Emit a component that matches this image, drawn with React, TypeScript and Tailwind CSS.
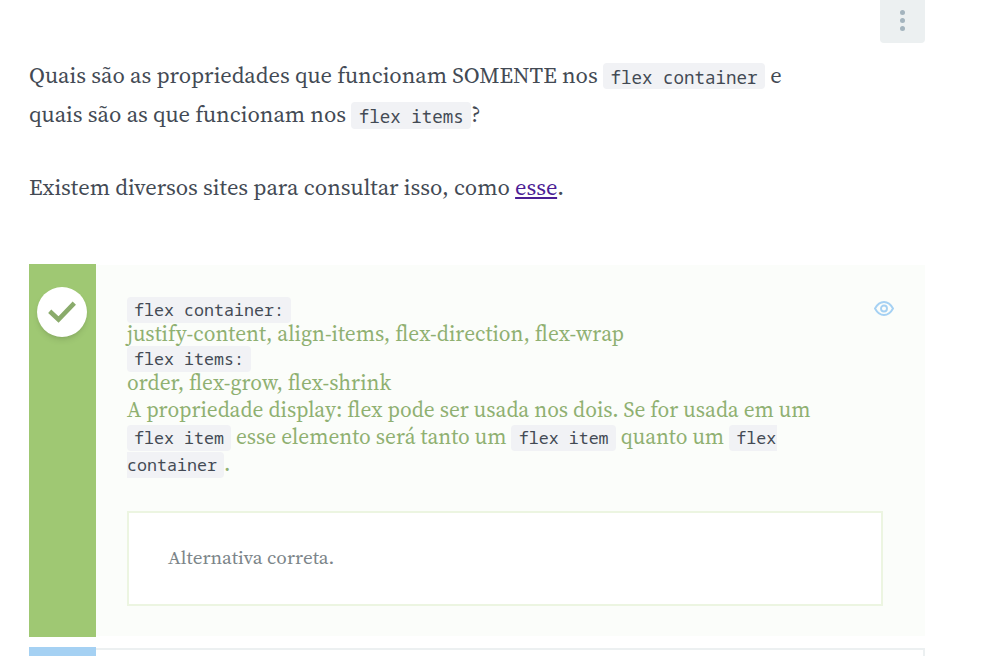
import type { ReactNode } from 'react';

const serif = "font-['Source_Serif_Pro','Source_Serif_4','Noto_Serif_CJK_SC','Liberation_Serif',serif]";
const mono = "font-['Noto_Sans_Mono','DejaVu_Sans_Mono',monospace]";

function Code({ children, className = '' }: { children: ReactNode; className?: string }) {
  return <code className={`rounded bg-[#f1f2f5] leading-none text-[#434a54] ${mono} ${className}`}>{children}</code>;
}

export default function App() {
  return (
    <main className={`relative h-[656px] w-[982px] overflow-hidden bg-white ${serif}`}>
      <div className="absolute top-0 left-[880px] flex h-[43px] w-[45px] flex-col items-center gap-[3px] rounded-b bg-[#ecf0f1] pt-[10px]">
        <i className="size-[5px] rounded-full bg-[#a4b4be]" />
        <i className="size-[5px] rounded-full bg-[#a4b4be]" />
        <i className="size-[5px] rounded-full bg-[#a4b4be]" />
      </div>
      <section className="h-[264px] pt-14 pl-[29px] text-[22.5px] leading-[39px] whitespace-nowrap text-[#434a54]">
        <p className="h-[39px]">
          Quais são as propriedades que funcionam SOMENTE nos{' '}
          <Code className="relative top-px pt-[2px] pr-[7.5px] pb-0 pl-[7.5px] text-[17.5px]">flex container</Code> e
        </p>
        <p className="h-[39px]">
          quais são as que funcionam nos <Code className="relative top-px px-[7.5px] pt-[2px] pb-px text-[17.5px]">flex items</Code>?
        </p>
        <p className="mt-[34px]">
          Existem diversos sites para consultar isso, como <a className="text-[#4c1d95] underline">esse</a>.
        </p>
      </section>
      <section className="ml-[29px] flex h-[373px] w-[896px]">
        <div className="w-[67px] bg-[#9fc873] pt-[23px] pl-2">
          <div className="flex size-[50px] items-center justify-center rounded-full bg-white shadow-md">
            <svg width="28" height="22" viewBox="0 0 28 22" fill="none" stroke="#8aab6b" strokeWidth="4.6">
              <path d="M1.7 10.3 10.5 18.5 26.3 2.2" />
            </svg>
          </div>
        </div>
        <div className="relative my-px flex-1 bg-[#fbfdfa] pt-8 pl-[31px] text-[21.37px] whitespace-nowrap text-[#8fb071]">
          <svg className="absolute top-[36px] right-[31px]" width="20" height="15" viewBox="0 0 20 15" fill="none" stroke="#a5d1f3" strokeWidth="1.9">
            <path d="M1 7.5Q4.5 1 10 1t9 6.5Q15.5 14 10 14T1 7.5Z" />
            <circle cx="10" cy="7.5" r="3" />
          </svg>
          <p className="h-6 leading-[24px]"><Code className="px-[7px] pt-px pb-[2px] text-[16.67px]">flex container:</Code></p>
          <p className="h-[25px] leading-[25px]">justify-content, align-items, flex-direction, flex-wrap</p>
          <p className="h-6 leading-[24px]"><Code className="px-[7px] pt-px pb-[2px] text-[16.67px]">flex items:</Code></p>
          <p className="h-[26px] leading-[25px]">order, flex-grow, flex-shrink</p>
          <p className="h-[27px] leading-[27px]">A propriedade display: flex pode ser usada nos dois. Se for usada em um</p>
          <p className="h-[27px] leading-[27px]">
            <Code className="px-[7px] pt-px pb-[2px] text-[16.67px]">flex item</Code> esse elemento será tanto um{' '}
            <Code className="px-[7.2px] pt-px pb-[2px] text-[16.67px]">flex item</Code> quanto um{' '}
            <Code className="rounded-r-none pt-px pr-px pb-[2px] pl-[7.2px] text-[16.67px]">flex</Code>
          </p>
          <p className="h-[27px] leading-[27px]"><Code className="rounded-l-none pt-px pr-[7px] pb-[2px] text-[16.67px]">container</Code>.</p>
          <div className="mt-[34px] h-[95px] w-[756px] border-2 border-[#ecf5e1] bg-white pt-[29px] pl-[39px] text-[19.15px] leading-[30px] text-[#7c8589]">Alternativa correta.</div>
        </div>
      </section>
      <section className="mt-[10px] ml-[29px] flex w-[896px]">
        <div className="h-[10px] w-[67px] bg-[#a5d1f3]" />
        <div className="mt-px h-[9px] flex-1 border-t-2 border-r-2 border-[#ecf0f1]" />
      </section>
    </main>
  );
}
